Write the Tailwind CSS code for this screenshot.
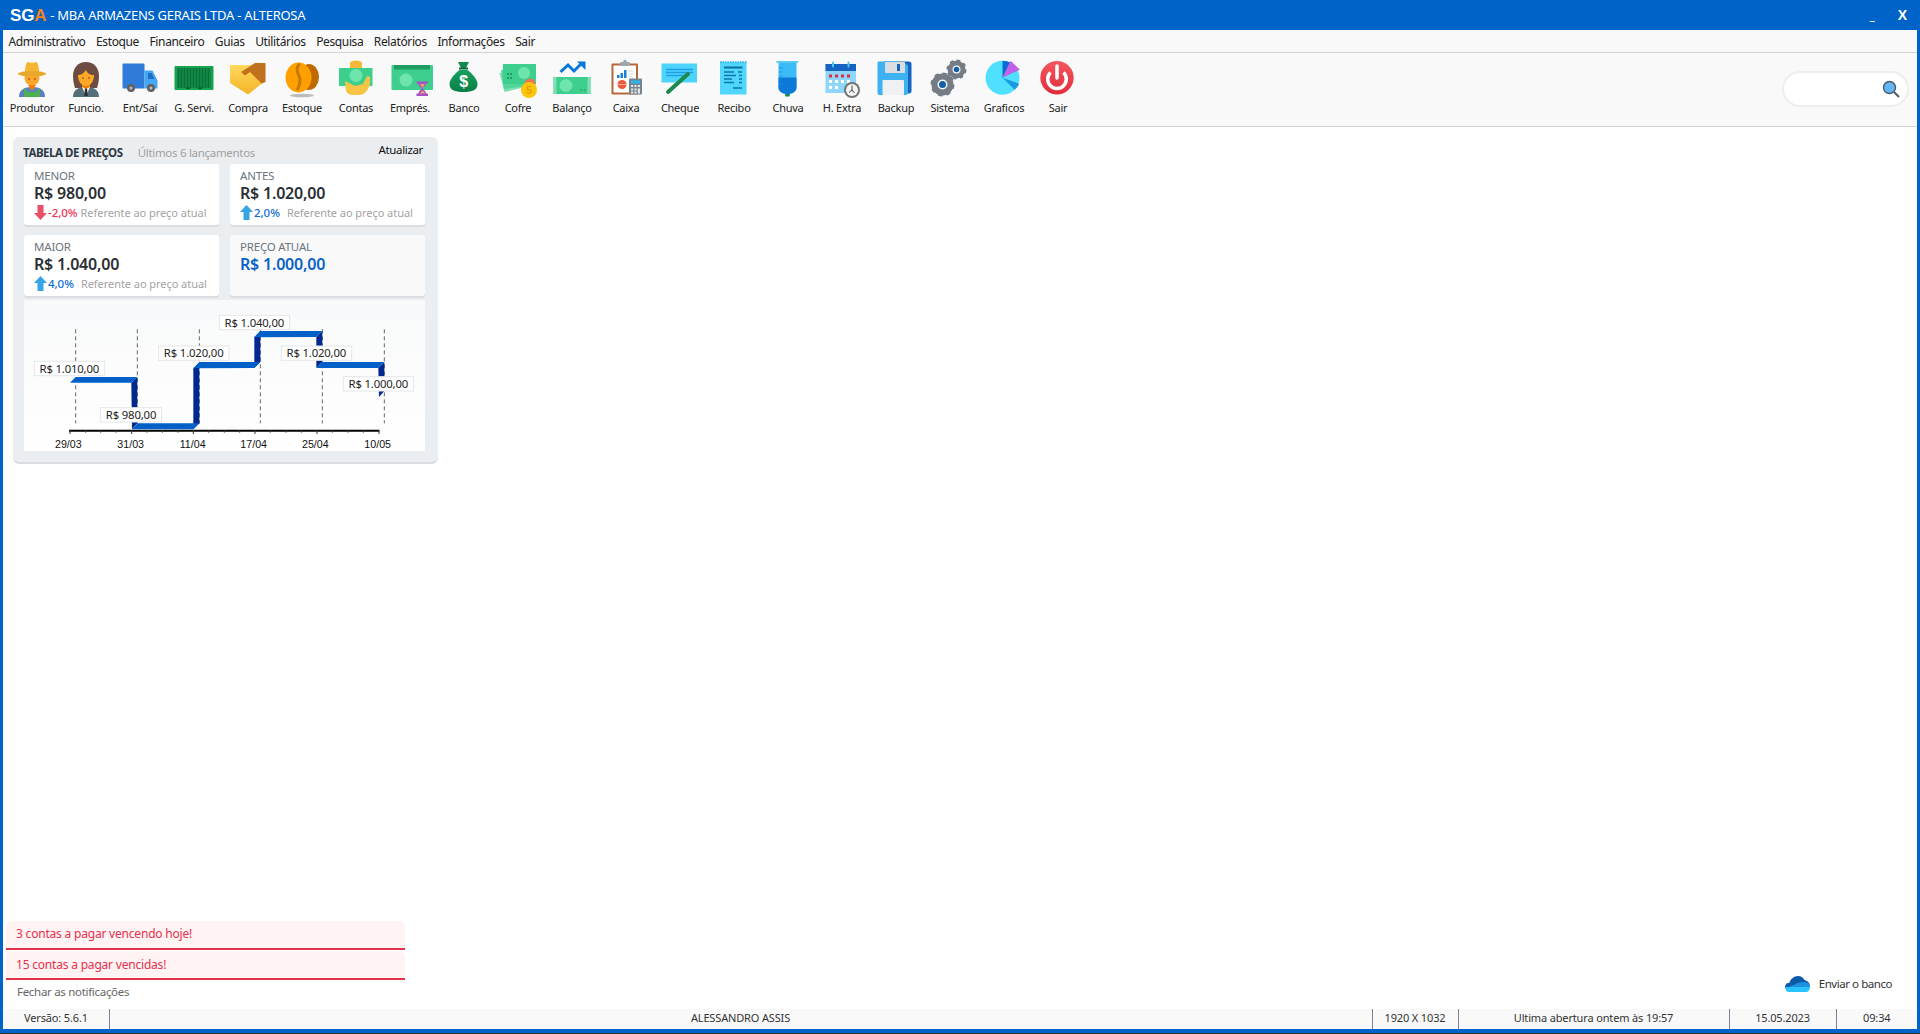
<!DOCTYPE html>
<html lang="pt-BR">
<head>
  <meta charset="UTF-8" />
  <title>SGA - MBA ARMAZENS GERAIS LTDA - ALTEROSA</title>
  <script src="https://cdn.jsdelivr.net/npm/@tailwindcss/browser@4"></script>
</head>
<body class="h-[1034px] w-full overflow-hidden flex flex-col bg-[#0063c8] font-['Noto_Sans',sans-serif] text-[12px] text-[#222]">

  <!-- title bar -->
  <header class="h-[30px] flex items-center pl-[10px] pr-[10px] pt-[1px] text-white shrink-0">
    <span class="font-['Liberation_Sans',sans-serif] font-bold text-[17px] tracking-[-0.2px]">SG<span class="text-[#f58220]">A</span></span>
    <span class="ml-[4px] text-[13px] tracking-[-0.25px]">- MBA ARMAZENS GERAIS LTDA - ALTEROSA</span>
    <span class="ml-auto font-bold text-[12px] mr-[23px]">_</span>
    <span class="font-bold text-[14px] mr-[3px] font-['Liberation_Sans',sans-serif]">X</span>
  </header>

  <div class="flex-1 mx-[3px] bg-white flex flex-col min-h-0">
    <!-- menu -->
    <nav class="h-[23px] shrink-0 bg-[#f9f9f9] border-b border-[#d2d2d2] flex items-center pt-[2px] pl-[5.5px] gap-[10.5px] tracking-[-0.37px]">
      <span>Administrativo</span><span>Estoque</span><span>Financeiro</span><span>Guias</span><span>Utilitários</span><span>Pesquisa</span><span>Relatórios</span><span>Informações</span><span>Sair</span>
    </nav>

    <!-- toolbar -->
    <div class="h-[74px] shrink-0 bg-[#f9f9f9] border-b border-[#d2d2d2] flex items-start pl-[2px] pt-[6px] relative text-[11px] tracking-[-0.25px]">
      <div class="w-[54px] flex flex-col items-center"><svg class="w-10 h-10 overflow-visible" viewBox="0 0 40 40"><path d="M7 38c0-7 5-10 13-10s13 3 13 10z" fill="#5b7fc7"/><path d="M12 38V30h3v3h10v-3h3v8z" fill="#4caf50"/><path d="M16 26h8l-4 6z" fill="#f57c00"/><circle cx="20" cy="19" r="7.5" fill="#ffa726"/><path d="M13 14c0-6 1-11 3-11 2 0 2 1 4 1s2-1 4-1c2 0 3 5 3 11z" fill="#f2b632"/><path d="M5.500 15c2-2 6-3 14.500-3s12.500 1 14.500 3c-3 2-8 2.500-14.500 2.500S8.500 17 5.500 15z" fill="#e9a82a"/><circle cx="17" cy="20" r=".8" fill="#5d4037"/><circle cx="23" cy="20" r=".8" fill="#5d4037"/></svg><span class="mt-[1px] leading-[16px]">Produtor</span></div>

      <div class="w-[54px] flex flex-col items-center"><svg class="w-10 h-10 overflow-visible" viewBox="0 0 40 40"><path d="M20 3c8 0 13 6 13 14 0 5-1 9-2 12H9C8 26 7 22 7 17 7 9 12 3 20 3z" fill="#6d4c41"/><path d="M7 38c0-7 5-10 13-10s13 3 13 10z" fill="#546e7a"/><path d="M16 28h8l-4 9z" fill="#fff"/><path d="M19 29h2l.8 8h-3.600z" fill="#263238"/><path d="M16 24h8v4l-4 2-4-2z" fill="#f57c00"/><path d="M12 16c3 0 6-2 8-5 1 3 4 5 8 5 0 6-3 11-8 11s-8-5-8-11z" fill="#ffa726"/><circle cx="17" cy="19" r=".8" fill="#5d4037"/><circle cx="23" cy="19" r=".8" fill="#5d4037"/></svg><span class="mt-[1px] leading-[16px]">Funcio.</span></div>

      <div class="w-[54px] flex flex-col items-center"><svg class="w-10 h-10 overflow-visible" viewBox="0 0 40 40"><rect x="2.500" y="4.500" width="22" height="25" rx="1" fill="#2f7bd8"/><path d="M24.500 11.500h8l5 10v8h-13z" fill="#45a6f5"/><path d="M28 14h3.500l3 6H28z" fill="#1c6fc4"/><circle cx="11" cy="29" r="4" fill="#616161"/><circle cx="11" cy="29" r="1.500" fill="#bdbdbd"/><circle cx="31" cy="29" r="4" fill="#616161"/><circle cx="31" cy="29" r="1.500" fill="#bdbdbd"/></svg><span class="mt-[1px] leading-[16px]">Ent/Saí</span></div>

      <div class="w-[54px] flex flex-col items-center"><svg class="w-10 h-10 overflow-visible" viewBox="0 0 40 40"><rect x="0.500" y="7" width="39" height="24" rx="1" fill="#16a34f"/><path d="M3 9h34v20H3z" fill="#128a47"/><path d="M4.500 9v20M7.500 9v20M10.500 9v20M13.500 9v20M16.500 9v20M19.500 9v20M22.500 9v20M25.500 9v20M28.500 9v20M31.500 9v20M34.500 9v20" stroke="#0c6f38" stroke-width="1.200"/><rect x="12" y="28.500" width="4" height="1.500" fill="#0b5c2e"/><rect x="24" y="28.500" width="4" height="1.500" fill="#0b5c2e"/></svg><span class="mt-[1px] leading-[16px]">G. Servi.</span></div>

      <div class="w-[54px] flex flex-col items-center"><svg class="w-10 h-10 overflow-visible" viewBox="0 0 40 40"><defs><linearGradient id="shake" x1="0" y1="0" x2="0" y2="1"><stop offset="0" stop-color="#ffd95e"/><stop offset="1" stop-color="#f3b326"/></linearGradient></defs><path d="M2 6h20l15 16-17 13.500L2 24z" fill="url(#shake)"/><path d="M13 13l14-9h10.500v19l-4 1.500L22 13l-5 3.500z" fill="#c1701b"/></svg><span class="mt-[1px] leading-[16px]">Compra</span></div>

      <div class="w-[54px] flex flex-col items-center"><svg class="w-10 h-10 overflow-visible" viewBox="0 0 40 40"><ellipse cx="20" cy="36.500" rx="12" ry="1.800" fill="#bdbdbd"/><ellipse cx="27" cy="18" rx="10" ry="13" fill="#bf6a02"/><ellipse cx="16.500" cy="18.500" rx="13" ry="15" fill="#ffa000"/><path d="M18 5c-5 3-3 8-1 12s1 9-2 14" fill="none" stroke="#c77800" stroke-width="3"/></svg><span class="mt-[1px] leading-[16px]">Estoque</span></div>

      <div class="w-[54px] flex flex-col items-center"><svg class="w-10 h-10 overflow-visible" viewBox="0 0 40 40"><path d="M14 10V3.500c0-1 4-2 6-2s6 1 6 2V10z" fill="#f5b83a"/><rect x="3" y="9" width="33.500" height="18" fill="#3ecf8e"/><circle cx="20" cy="16.500" r="6.500" fill="#6de5ac"/><path d="M9 22l1 10c1 3 4 4 7 4h6c6 0 11-6 11-14v-4l-3-1-4 8-8 2z" fill="#f7c445"/></svg><span class="mt-[1px] leading-[16px]">Contas</span></div>

      <div class="w-[54px] flex flex-col items-center"><svg class="w-10 h-10 overflow-visible" viewBox="0 0 40 40"><rect x="1.500" y="6" width="41.500" height="25" rx="1" fill="#3ecf8e"/><rect x="4" y="6" width="36" height="4.500" fill="#1f9d63"/><circle cx="16" cy="21" r="6.500" fill="#6de5ac"/><path d="M26.500 22.500h11.500v2h-2c0 3-3 3.500-3 5s3 2 3 5h2v2.500H26.500V34.500h2c0-3 3-3.500 3-5s-3-2-3-5h-2z" fill="#a64fc9"/><path d="M30 25h5l-2.500 4zM29.500 34.500l3-3 3 3z" fill="#f0a35e"/></svg><span class="mt-[1px] leading-[16px]">Emprés.</span></div>

      <div class="w-[54px] flex flex-col items-center"><svg class="w-10 h-10 overflow-visible" viewBox="0 0 40 40"><defs><linearGradient id="bag" x1="0" y1="0" x2="0" y2="1"><stop offset="0" stop-color="#16a05c"/><stop offset="1" stop-color="#0b7f48"/></linearGradient></defs><path d="M14 3h11l-3 6h-5z" fill="#128a50"/><rect x="15" y="8.500" width="9" height="2" fill="#0b6b3e"/><path d="M15.500 11h8c4 3 10 9 10 14 0 6-5 8-14 8s-14-2-14-8c0-5 6-11 10-14z" fill="url(#bag)"/><text x="19.500" y="28" text-anchor="middle" font-family="Liberation Sans" font-weight="700" font-size="16" fill="#fff">$</text></svg><span class="mt-[1px] leading-[16px]">Banco</span></div>

      <div class="w-[54px] flex flex-col items-center"><svg class="w-10 h-10 overflow-visible" viewBox="0 0 40 40"><path d="M1.500 14l30-2 3 14-28 7z" fill="#7ee0b2"/><path d="M3 11l33-2v17L6 30z" fill="#52d49b"/><rect x="5" y="5" width="33" height="20" fill="#3ecf8e"/><circle cx="26" cy="14" r="6" fill="#6de5ac"/><path d="M9 14h2v2H9zM12 14h2v2h-2zM9 18h2v2H9zM12 18h2v2h-2z" fill="#1f9d63"/><circle cx="32" cy="25" r="5.500" fill="#ef7350"/><circle cx="31" cy="31" r="8" fill="#fbc50f"/><text x="31" y="35" text-anchor="middle" font-family="Liberation Sans" font-weight="700" font-size="11" fill="#e8a200">5</text></svg><span class="mt-[1px] leading-[16px]">Cofre</span></div>

      <div class="w-[54px] flex flex-col items-center"><svg class="w-10 h-10 overflow-visible" viewBox="0 0 40 40"><rect x="1.500" y="18" width="37" height="17" fill="#3ecf8e"/><rect x="1.500" y="18" width="3" height="17" fill="#7ee0b2"/><rect x="35.500" y="18" width="3" height="17" fill="#7ee0b2"/><circle cx="14" cy="26.500" r="6.500" fill="#6de5ac"/><path d="M28 30h2v2h-2zM31.500 30h2v2h-2z" fill="#2bb673"/><path d="M8.500 13l7.500-7 6 6 7-7" fill="none" stroke="#0678dc" stroke-width="3"/><path d="M25 2.500h8.500V11z" fill="#0678dc"/></svg><span class="mt-[1px] leading-[16px]">Balanço</span></div>

      <div class="w-[54px] flex flex-col items-center"><svg class="w-10 h-10 overflow-visible" viewBox="0 0 40 40"><rect x="5.500" y="4.500" width="26.500" height="31" rx="1" fill="#b5683c"/><rect x="7.500" y="6.500" width="22.500" height="27" fill="#fff"/><rect x="14" y="3" width="10" height="4" rx="1" fill="#9ea7ad"/><circle cx="19" cy="2.500" r="1.800" fill="#9ea7ad"/><path d="M11 16h2.500v3H11zM14.500 14h2.500v5h-2.500zM18 11h2.500v8H18z" fill="#1b7fd9"/><path d="M22 12h5M22 15h5M22 18h5" stroke="#d8dde0"/><circle cx="16" cy="25.500" r="4.500" fill="#ef5a3c"/><path d="M11.500 25.500h9" stroke="#ffb199" stroke-width="1"/><rect x="23" y="19.500" width="13" height="16" rx="1" fill="#78848c"/><rect x="25" y="21.500" width="9" height="3" fill="#29b6f6"/><path d="M25 26h2.200v2H25zM28.400 26h2.200v2h-2.200zM31.800 26H34v2h-2.200zM25 29.500h2.200v2H25zM28.400 29.500h2.200v2h-2.200zM31.800 29.500H34v5h-2.200zM25 32.500h2.200v2H25zM28.400 32.500h2.200v2h-2.200z" fill="#e3e7e9"/></svg><span class="mt-[1px] leading-[16px]">Caixa</span></div>

      <div class="w-[54px] flex flex-col items-center"><svg class="w-10 h-10 overflow-visible" viewBox="0 0 40 40"><rect x="1.500" y="4.500" width="35.500" height="19" fill="#4dd4fd"/><path d="M6 10.500h27M6 13.500h27M6 16.500h18" stroke="#1f9de6" stroke-width="1.300"/><path d="M8 33l20-18" stroke="#1b8a4e" stroke-width="4" stroke-linecap="round"/></svg><span class="mt-[1px] leading-[16px]">Cheque</span></div>

      <div class="w-[54px] flex flex-col items-center"><svg class="w-10 h-10 overflow-visible" viewBox="0 0 40 40"><rect x="6" y="3" width="26.500" height="32.500" fill="#50d6fc"/><path d="M6 3h26.500" stroke="#2bb3e6" stroke-width="1.500" stroke-dasharray="1.500 1"/><path d="M10 8.500h18.500" stroke="#0c6f9e" stroke-width="2"/><path d="M10 13h10M10 16.500h12M10 20h8M10 23.500h10M24 13h4M25 16.500h3M25 20h3M25 23.500h3M19 29h9" stroke="#0c78a8" stroke-width="1.400"/></svg><span class="mt-[1px] leading-[16px]">Recibo</span></div>

      <div class="w-[54px] flex flex-col items-center"><svg class="w-10 h-10 overflow-visible" viewBox="0 0 40 40"><path d="M16.500 33h6l-1 4.500h-4z" fill="#1b8a4e"/><path d="M10.500 4h18v25c0 3-4 6-9 6s-9-3-9-6z" fill="#3bbcf7"/><path d="M10.500 18.500h18V29c0 3-4 6-9 6s-9-3-9-6z" fill="#0c79d9"/><rect x="8.500" y="2" width="21.500" height="2" fill="#5cc9f7"/><path d="M11 9h4M11 13h3M11 17h4M11 21h3M11 25h4" stroke="#1a8fe0" stroke-width=".8"/></svg><span class="mt-[1px] leading-[16px]">Chuva</span></div>

      <div class="w-[54px] flex flex-col items-center"><svg class="w-10 h-10 overflow-visible" viewBox="0 0 40 40"><rect x="3.500" y="5" width="30.500" height="29" fill="#8fd6fb"/><rect x="3.500" y="5" width="30.500" height="7" fill="#1565c0"/><rect x="10" y="2.500" width="2" height="6" rx="1" fill="#4fc3f7"/><rect x="25.500" y="2.500" width="2" height="6" rx="1" fill="#4fc3f7"/><path d="M7 15.500h3v3H7zM13 15.500h3v3h-3zM19 15.500h3v3h-3zM25 15.500h3v3h-3z" fill="#e02b3a"/><path d="M7 21h3v3H7zM13 21h3v3h-3zM19 21h3v3h-3zM25 21h3v3h-3zM7 27h3v3H7zM13 27h3v3h-3z" fill="#fff"/><circle cx="30" cy="31" r="8" fill="#757575"/><circle cx="30" cy="31" r="6" fill="#f5f5f5"/><path d="M30 26.500V31l-3 2.500M30 31l2.500 3" stroke="#444" stroke-width="1" fill="none"/></svg><span class="mt-[1px] leading-[16px]">H. Extra</span></div>

      <div class="w-[54px] flex flex-col items-center"><svg class="w-10 h-10 overflow-visible" viewBox="0 0 40 40"><path d="M8 2.500h25c1.500 0 2.500 1 2.500 2.500v27c0 1.500-1 2.500-2.500 2.500H8z" fill="#1565c0"/><path d="M3.500 2.500H27l5 4v27c0 1.500-1 2.500-2.500 2.500h-26C2 36 1.500 35 1.500 33.500V4.500C1.500 3 2 2.500 3.500 2.500z" fill="#3db1f2"/><rect x="9" y="3" width="20" height="11" rx=".5" fill="#d9dde0"/><rect x="21" y="5" width="3" height="7" fill="#1565c0"/><rect x="6.500" y="21" width="21.500" height="15" rx="1" fill="#eef0f2"/></svg><span class="mt-[1px] leading-[16px]">Backup</span></div>

      <div class="w-[54px] flex flex-col items-center"><svg class="w-10 h-10 overflow-visible" viewBox="0 0 40 40"><circle cx="12.500" cy="25.500" r="8" fill="none" stroke="#757c85" stroke-width="6"/><circle cx="12.500" cy="25.500" r="10.500" fill="none" stroke="#757c85" stroke-width="3" stroke-dasharray="4.200 4"/><circle cx="12.500" cy="25.500" r="3.500" fill="#1460a8"/><circle cx="26.500" cy="10.500" r="6.500" fill="none" stroke="#757c85" stroke-width="5"/><circle cx="26.500" cy="10.500" r="8.800" fill="none" stroke="#757c85" stroke-width="2.500" stroke-dasharray="3.500 3.400"/><circle cx="26.500" cy="10.500" r="2.800" fill="#1460a8"/></svg><span class="mt-[1px] leading-[16px]">Sistema</span></div>

      <div class="w-[54px] flex flex-col items-center"><svg class="w-10 h-10 overflow-visible" viewBox="0 0 40 40"><circle cx="18.500" cy="18.700" r="17" fill="#4fe0ff"/><path d="M18.500 18.700V1.700c3 0 6 .7 8 2z" fill="#0b6bd6"/><path d="M18.500 18.700l8-17 9.500 9z" fill="#bf62e8"/><path d="M18.500 18.700l16.700 6c-1 2.300-2.500 4.300-4.500 6z" fill="#1a9be0"/></svg><span class="mt-[1px] leading-[16px]">Graficos</span></div>

      <div class="w-[54px] flex flex-col items-center"><svg class="w-10 h-10 overflow-visible" viewBox="0 0 40 40"><defs><linearGradient id="off" x1="0" y1="0" x2="0" y2="1"><stop offset="0" stop-color="#f2585f"/><stop offset="1" stop-color="#e22b3c"/></linearGradient></defs><circle cx="19" cy="18.700" r="16.700" fill="url(#off)"/><path d="M12.500 13.500a9.300 9.300 0 1 0 13 0" fill="none" stroke="#fff" stroke-width="3.500"/><path d="M19 7v12" stroke="#fff" stroke-width="3.500" stroke-linecap="round"/></svg><span class="mt-[1px] leading-[16px]">Sair</span></div>

      <!-- search -->
      <div class="absolute right-[8px] top-[18px] w-[127px] h-[36px] rounded-full bg-white border-2 border-[#eeeeee] flex items-center justify-end pr-[6px]">
        <svg class="w-[20px] h-[20px]" viewBox="0 0 20 20"><circle cx="8.500" cy="8.500" r="6" fill="#64b5f6" stroke="#4a5a66" stroke-width="1.400"/><path d="M13 13l5 5" stroke="#4a5a66" stroke-width="2"/></svg>
      </div>
    </div>

    <!-- content -->
    <main class="flex-1 min-h-0 flex flex-col justify-between">
      <section class="mt-[10px] ml-[10px] w-[425px] h-[325px] rounded-md bg-[#ebeef1] shadow-[0_2px_0_#dadde1] pl-[11px] pr-[13px]">
        <div class="h-[27px] flex items-center relative">
          <span class="font-bold text-[11.5px] text-[#2e3a44] tracking-[-0.45px] -ml-[1px] mt-[5px]">TABELA DE PREÇOS</span>
          <span class="ml-[15px] mt-[5px] text-[11.5px] text-[#a0a0a0] tracking-[-0.3px]">Últimos 6 lançamentos</span>
          <span class="absolute right-[2px] top-[4px] text-[11.5px] text-[#111] tracking-[-0.35px]">Atualizar</span>
        </div>

        <div class="grid grid-cols-2 gap-x-[11px] gap-y-[10px]">
          <div class="h-[61px] rounded-[3px] bg-white shadow-[0_2px_0_#d9dde2] pl-[10px] pt-[3px]">
            <div class="text-[11.5px] text-[#6c757d] leading-[17px] tracking-[-0.2px]">MENOR</div>
            <div class="-mt-[1px] text-[16px] font-semibold text-[#2b2f33] leading-[20px] tracking-[-0.2px]">R$ 980,00</div>
            <div class="flex items-center text-[11px] leading-[19px] tracking-[-0.05px]"><svg class="w-[13px] h-[15px] mr-[1px]" viewBox="0 0 13 15"><path d="M3.500 0h6v8h3.500l-6.500 7L0 8h3.500z" fill="#ea4f68"/></svg><span class="text-[#ee2f50] font-medium text-[11.5px]">-2,0%</span><span class="ml-[3px] text-[#a3a3a3]">Referente ao preço atual</span></div>
          </div>
          <div class="h-[61px] rounded-[3px] bg-white shadow-[0_2px_0_#d9dde2] pl-[10px] pt-[3px]">
            <div class="text-[11.5px] text-[#6c757d] leading-[17px] tracking-[-0.2px]">ANTES</div>
            <div class="-mt-[1px] text-[16px] font-semibold text-[#2b2f33] leading-[20px] tracking-[-0.2px]">R$ 1.020,00</div>
            <div class="flex items-center text-[11px] leading-[19px] tracking-[-0.05px]"><svg class="w-[13px] h-[15px] mr-[1px]" viewBox="0 0 13 15"><path d="M3.500 15h6V7H13L6.500 0 0 7h3.500z" fill="#35a5e6"/></svg><span class="text-[#0a6ed1] font-medium text-[11.5px]">2,0%</span><span class="ml-[7px] text-[#a3a3a3]">Referente ao preço atual</span></div>
          </div>
          <div class="h-[61px] rounded-[3px] bg-white shadow-[0_2px_0_#d9dde2] pl-[10px] pt-[3px]">
            <div class="text-[11.5px] text-[#6c757d] leading-[17px] tracking-[-0.2px]">MAIOR</div>
            <div class="-mt-[1px] text-[16px] font-semibold text-[#2b2f33] leading-[20px] tracking-[-0.2px]">R$ 1.040,00</div>
            <div class="flex items-center text-[11px] leading-[19px] tracking-[-0.05px]"><svg class="w-[13px] h-[15px] mr-[1px]" viewBox="0 0 13 15"><path d="M3.500 15h6V7H13L6.500 0 0 7h3.500z" fill="#35a5e6"/></svg><span class="text-[#0a6ed1] font-medium text-[11.5px]">4,0%</span><span class="ml-[7px] text-[#a3a3a3]">Referente ao preço atual</span></div>
          </div>
          <div class="h-[61px] rounded-[3px] bg-[#f9f9fa] shadow-[0_2px_0_#d9dde2] pl-[10px] pt-[3px]">
            <div class="text-[11.5px] text-[#6c757d] leading-[17px] tracking-[-0.2px]">PREÇO ATUAL</div>
            <div class="-mt-[1px] text-[16px] font-semibold text-[#0a62c9] leading-[20px] tracking-[-0.2px]">R$ 1.000,00</div>
          </div>
        </div>

        <!-- chart, drawn in 1/3 px units taken from the screen -->
        <div class="mt-[4px] h-[151px] bg-gradient-to-b from-[#f8f9fa] to-white">
          <svg class="block w-[401px] h-[151px]" viewBox="72 15 1203 453">
            <path d="M227 103V385M412 103V385M598 103V385M781 103V385M967 103V385M1153 103V385" stroke="#666" stroke-width="3" stroke-dasharray="12 9" fill="none"/>
            <path d="M207 407H1138" stroke="#000" stroke-width="6"/>
            <path d="M210 405v12M257 405v8M302 405v8M348 405v8M395 405v12M441 405v8M487 405v8M534 405v8M580 405v12M626 405v8M673 405v8M719 405v8M765 405v12M811 405v8M858 405v8M904 405v8M951 405v12M997 405v8M1044 405v8M1090 405v8M1137 405v12" stroke="#333" stroke-width="3"/>
            <g fill="#00288f">
              <polygon points="394,263 412,246 412,385 396,403"/>
              <polygon points="580,220 598,203 598,385 580,403"/>
              <polygon points="763,219 781,201 781,108 763,127"/>
              <polygon points="949,126 967,108 967,201 949,219"/>
              <polygon points="1135,219 1153,201 1153,288 1137,306"/>
            </g>
            <g fill="#0060c8">
              <polygon points="210,263 227,246 412,246 394,263"/>
              <polygon points="396,403 413,385 598,385 580,403"/>
              <polygon points="580,220 598,201 781,201 763,219"/>
              <polygon points="763,127 781,108 967,108 949,126"/>
              <polygon points="949,219 967,201 1153,201 1135,219"/>
            </g>
            <g fill="#fff" stroke="#e4e6e8" stroke-width="3">
              <rect x="103" y="199" width="211" height="43"/>
              <rect x="301" y="338" width="184" height="43"/>
              <rect x="476" y="153" width="211" height="43"/>
              <rect x="658" y="61" width="211" height="43"/>
              <rect x="844" y="153" width="211" height="43"/>
              <rect x="1030" y="245" width="211" height="43"/>
            </g>
            <g font-family="Noto Sans" font-size="34" fill="#222" text-anchor="middle" letter-spacing="-0.5">
              <text x="208" y="233">R$ 1.010,00</text>
              <text x="393" y="372">R$ 980,00</text>
              <text x="581" y="187">R$ 1.020,00</text>
              <text x="763" y="95">R$ 1.040,00</text>
              <text x="949" y="187">R$ 1.020,00</text>
              <text x="1135" y="279">R$ 1.000,00</text>
            </g>
            <g font-family="Liberation Sans" font-size="32" fill="#111" text-anchor="middle">
              <text x="205" y="458">29/03</text>
              <text x="392" y="458">31/03</text>
              <text x="578" y="458">11/04</text>
              <text x="761" y="458">17/04</text>
              <text x="946" y="458">25/04</text>
              <text x="1133" y="458">10/05</text>
            </g>
          </svg>
        </div>
      </section>

      <div class="flex items-end justify-between">
        <div class="w-[399px] ml-[3px]">
          <div class="h-[29px] mb-[1.500px] rounded-t-[6px] bg-[#fff3f3] border-b-2 border-[#df3348] pl-[10px] flex items-center text-[#e5304e] tracking-[-0.2px]">3 contas a pagar vencendo hoje!</div>
          <div class="h-[29px] rounded-t-[6px] bg-[#fff3f3] border-b-2 border-[#df3348] pl-[10px] flex items-center text-[#e5304e] tracking-[-0.2px]">15 contas a pagar vencidas!</div>
          <div class="h-[29px] pl-[11px] pt-[3px] text-[11.5px] leading-[18px] text-[#666] tracking-[-0.3px]">Fechar as notificações</div>
        </div>
        <div class="flex items-center mr-[25px] mb-[16px] text-[11.5px] text-[#333] tracking-[-0.45px]">
          <svg class="w-[26px] h-[18px] mr-[9px]" viewBox="0 0 26 18"><path d="M5 9c1-5 5-8 9-8 3 0 5 1.500 6.500 4C23 5.500 26 8 26 11H4z" fill="#0f5aa8"/><path d="M5 8c3 0 5 1 6 2l3 2-3 1H1c0-3 1-5 4-5z" fill="#0f5aa8"/><path d="M1 12h25c0 3-2 5-4 5H5c-2 0-4-2-4-5z" fill="#29c3ff"/><path d="M10 10c2-2 6-3 10-3 3 0 6 2 6 5H5c1-1 3-2 5-2z" fill="#1f8fe0"/></svg>
          <span>Enviar o banco</span>
        </div>
      </div>
    </main>

    <!-- status bar -->
    <footer class="h-[20px] shrink-0 bg-[#f9f9f9] flex text-[11px] text-[#333] tracking-[-0.15px]">
      <div class="w-[106.500px] border-r border-[#7a8494] flex items-center pb-[1px] pl-[21px]">Versão: 5.6.1</div>
      <div class="w-[1263px] border-r border-[#7a8494] flex items-center pb-[1px] justify-center">ALESSANDRO ASSIS</div>
      <div class="w-[86px] border-r border-[#7a8494] flex items-center pb-[1px] justify-center">1920 X 1032</div>
      <div class="w-[271px] border-r border-[#7a8494] flex items-center pb-[1px] justify-center">Ultima abertura ontem às 19:57</div>
      <div class="w-[107px] border-r border-[#7a8494] flex items-center pb-[1px] justify-center">15.05.2023</div>
      <div class="flex-1 flex items-center pb-[1px] justify-center">09:34</div>
    </footer>
  </div>

  <div class="h-[4px] shrink-0"></div>
  <div class="h-[1px] shrink-0 bg-[#333]"></div>
</body>
</html>
